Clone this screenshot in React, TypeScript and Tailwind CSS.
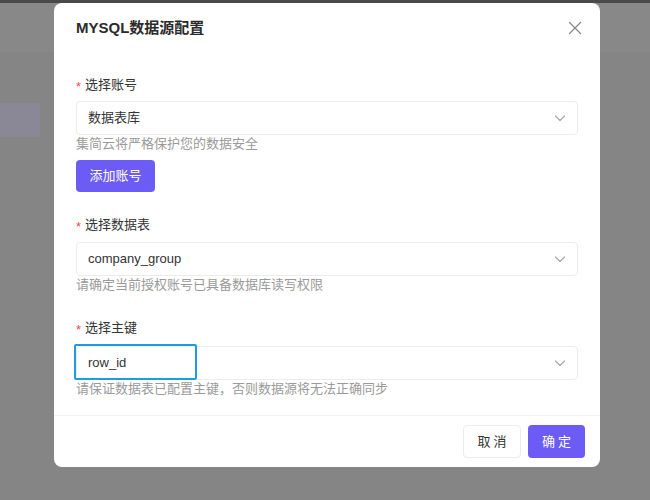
import React from "react";

const font = { fontFamily: '"Liberation Sans", "Noto Sans CJK SC", sans-serif' };

function Chevron() {
  return (
    <svg width="14" height="14" viewBox="0 0 14 14" fill="none">
      <path d="M2.5 5l4.5 4.5L11.5 5" stroke="#a8a8a8" strokeWidth="1.2" strokeLinecap="round" strokeLinejoin="round" />
    </svg>
  );
}

function Label({ text }: { text: string }) {
  return (
    <div className="flex items-center h-[20px] text-[13px] text-[#333]">
      <span className="text-[#f5484d] mr-[4px] text-[13px] leading-none mt-[3px]">*</span>
      {text}
    </div>
  );
}

function Select({ value, highlight }: { value: string; highlight?: boolean }) {
  return (
    <div className="relative h-[34px] rounded-[4px] border border-[#ececec] flex items-center justify-between pl-[11px] pr-[10px] text-[13px] text-[#333]">
      <span>{value}</span>
      <Chevron />
      {highlight && (
        <div className="absolute left-[-3px] top-[-3px] w-[123px] h-[36px] border-2 border-[#1d9ce3] rounded-[2px]" />
      )}
    </div>
  );
}

function Help({ text }: { text: string }) {
  return <div className="text-[13px] text-[#9a9a9a] h-[18px] leading-[18px]">{text}</div>;
}

export default function App() {
  return (
    <div className="w-[650px] h-[500px] relative overflow-hidden bg-[#858585]" style={font}>
      <div className="h-[3px] bg-[#4a4a4a]" />
      <div className="h-[49px] bg-[#888888]" />
      <div className="absolute left-0 top-[103px] w-[40px] h-[34px] bg-[#8a8897]" />
      <div className="absolute left-[54px] top-[3px] w-[546px] h-[464px] bg-white rounded-[8px] flex flex-col">
        <div className="flex items-center justify-between pl-[22px] pr-[18px] h-[50px]">
          <div className="text-[15px] font-bold text-[#2b2b2b]">MYSQL数据源配置</div>
          <svg width="14" height="14" viewBox="0 0 14 14" fill="none">
            <path d="M1.5 1.5l11 11M12.5 1.5l-11 11" stroke="#8a8a8a" strokeWidth="1.3" strokeLinecap="round" />
          </svg>
        </div>
        <div className="px-[22px] pt-[22px] flex-1">
          <Label text="选择账号" />
          <div className="mt-[6px]"><Select value="数据表库" /></div>
          <Help text="集简云将严格保护您的数据安全" />
          <button className="mt-[7px] w-[79px] h-[32px] rounded-[4px] bg-[#6c5cf5] text-white text-[13px]">添加账号</button>
          <div className="mt-[23px]"><Label text="选择数据表" /></div>
          <div className="mt-[7px]"><Select value="company_group" /></div>
          <Help text="请确定当前授权账号已具备数据库读写权限" />
          <div className="mt-[24px]"><Label text="选择主键" /></div>
          <div className="mt-[8px]"><Select value="row_id" highlight /></div>
          <Help text="请保证数据表已配置主键，否则数据源将无法正确同步" />
        </div>
        <div className="h-px bg-[#f2f2f2]" />
        <div className="flex justify-end gap-[7px] pr-[15px] pt-[9px] pb-[9px]">
          <button className="w-[58px] h-[33px] rounded-[4px] border border-[#ececec] bg-white text-[13px] text-[#333] tracking-[3px] pl-[3px]">取消</button>
          <button className="w-[57px] h-[33px] rounded-[4px] bg-[#6c5cf5] text-white text-[13px] tracking-[3px] pl-[3px]">确定</button>
        </div>
      </div>
    </div>
  );
}
